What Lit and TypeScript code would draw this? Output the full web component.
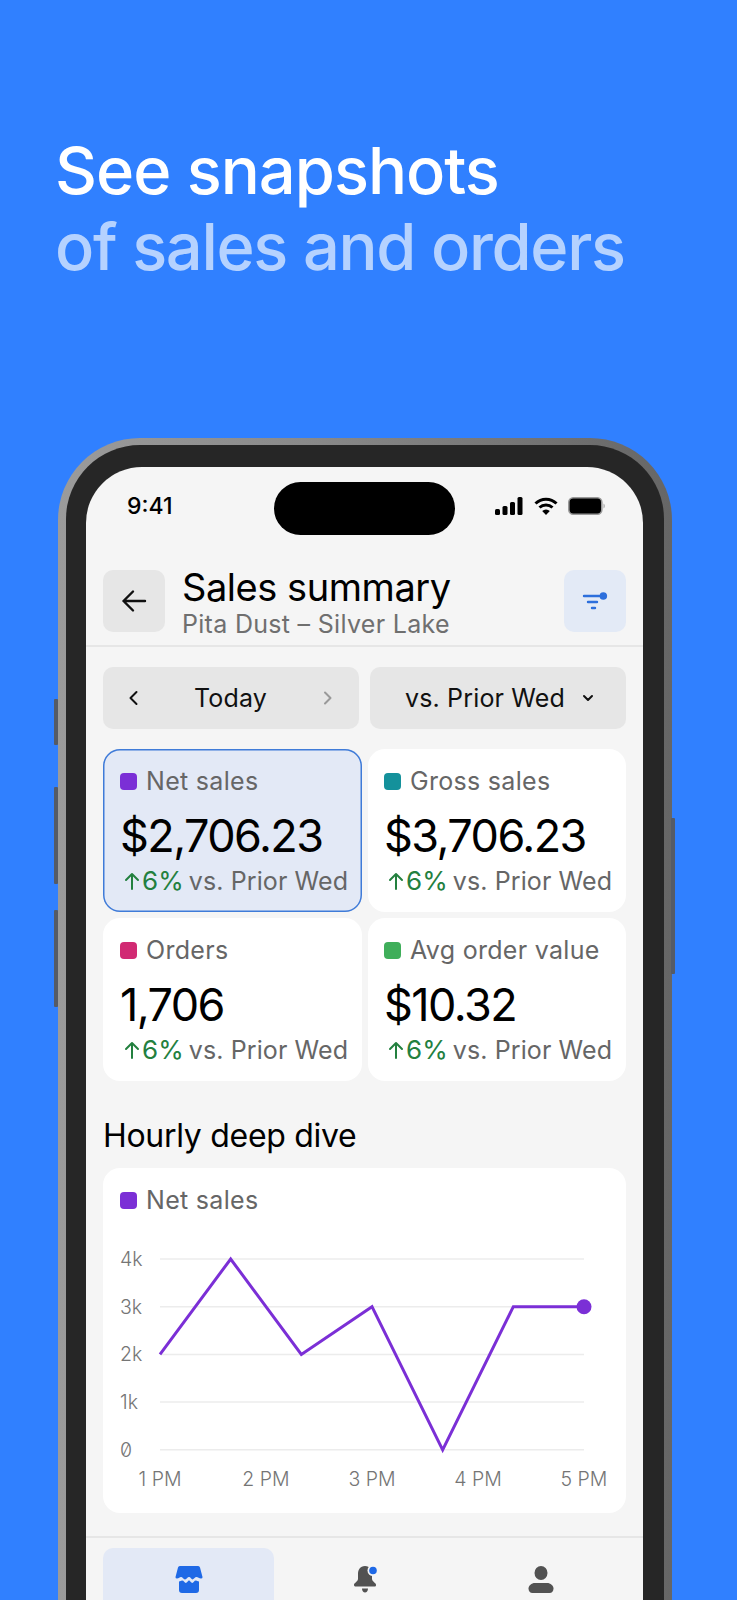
import { LitElement, html, css, svg } from "lit";
import { customElement } from "lit/decorators.js";

const cards = [
  { label: "Net sales", value: "$2,706.23", color: "#7b2fd6", active: true },
  { label: "Gross sales", value: "$3,706.23", color: "#14919b" },
  { label: "Orders", value: "1,706", color: "#d12a73" },
  { label: "Avg order value", value: "$10.32", color: "#3fae5a" },
];

const W = 424;
const values = [2, 4, 2, 3, 0, 3, 3];
const pts = values
  .map((v, i) => `${(i * W) / 6},${(4 - v) * 47.7}`)
  .join(" ");

@customElement("app-root")
export class AppRoot extends LitElement {
  static styles = css`
    :host {
      display: block;
      height: 1600px;
      overflow: hidden;
      font-family: Inter, "Liberation Sans", sans-serif;
    }
    .page {
      height: 1600px;
      overflow: hidden;
      background: #3080ff;
      padding-top: 133px;
      box-sizing: border-box;
    }
    h1 {
      margin: 0 0 0 55px;
      font-size: 65px;
      line-height: 76px;
      font-weight: 500;
      letter-spacing: -1px;
      color: #fff;
    }
    h1 span {
      display: block;
      color: #b5d2ff;
      letter-spacing: -1.35px;
    }
    .phone {
      position: relative;
      margin: 153px 0 0 58px;
      width: 614px;
      height: 1300px;
    }
    .side {
      position: absolute;
      width: 4px;
      background: #555b66;
      border-radius: 1px;
    }
    .bezel {
      height: 100%;
      box-sizing: border-box;
      padding: 7px 8px 0;
      border-radius: 82px;
      background: linear-gradient(90deg, #9b9b9b 0%, #8a8a8a 40%, #666 100%);
    }
    .inner {
      height: 100%;
      box-sizing: border-box;
      padding: 22px 21px 0 20px;
      border-radius: 74px;
      background: #262626;
    }
    .screen {
      position: relative;
      height: 100%;
      border-radius: 56px 56px 0 0;
      background: #f5f5f5;
      overflow: hidden;
    }
    .island {
      position: absolute;
      left: 188px;
      top: 15px;
      width: 181px;
      height: 53px;
      border-radius: 27px;
      background: #000;
    }
    .status {
      display: flex;
      align-items: center;
      justify-content: space-between;
      height: 78px;
      padding: 0 38px 0 41px;
      box-sizing: border-box;
      font-size: 23px;
      font-weight: 500;
      color: #000;
    }
    .status-icons {
      display: flex;
      align-items: center;
      gap: 10.5px;
    }
    .header {
      display: flex;
      align-items: flex-start;
      gap: 17px;
      padding: 25px 17px 13px;
      border-bottom: 2px solid #e6e6e6;
    }
    .iconbtn {
      width: 62px;
      height: 62px;
      border-radius: 10px;
      background: #e6e6e6;
      display: flex;
      align-items: center;
      justify-content: center;
      flex: none;
    }
    .iconbtn.blue {
      background: #e3eaf6;
    }
    .titles {
      flex: 1;
      margin: -4px 0 -7px;
    }
    .title {
      font-size: 38px;
      line-height: 42px;
      color: #000;
      letter-spacing: -0.45px;
    }
    .sub {
      font-size: 25px;
      line-height: 29px;
      margin-top: 2px;
      color: #6f6f6f;
      letter-spacing: 0.3px;
    }
    .filters {
      display: grid;
      grid-template-columns: 256px 256px;
      gap: 11px;
      padding: 20px 17px 20px;
    }
    .filter {
      height: 62px;
      border-radius: 10px;
      background: #e6e6e6;
      display: flex;
      align-items: center;
      justify-content: space-between;
      padding: 0 24px 0 23px;
      box-sizing: border-box;
      font-size: 25px;
      letter-spacing: 0.15px;
      color: #111;
    }
    .filter.compare {
      justify-content: center;
      gap: 16px;
      padding-left: 28px;
    }
    .grid {
      display: grid;
      grid-template-columns: 259px 258px;
      gap: 6px;
      padding: 0 17px;
    }
    .card {
      height: 163px;
      box-sizing: border-box;
      border-radius: 17px;
      background: #fff;
      padding: 17px 0 0 17px;
      white-space: nowrap;
    }
    .card:nth-child(even) {
      padding-left: 16px;
    }
    .card.active {
      background: #e3e9f6;
      box-shadow: inset 0 0 0 1.5px #3f7bd8;
    }
    .legend {
      display: flex;
      align-items: center;
      gap: 9px;
      font-size: 25px;
      line-height: 30px;
      letter-spacing: 0.3px;
      color: #666;
    }
    .legend i {
      width: 17px;
      height: 17px;
      border-radius: 4px;
      flex: none;
    }
    .value {
      font-size: 45px;
      line-height: 56px;
      color: #000;
      margin-top: 12px;
      letter-spacing: -1.55px;
    }
    .delta {
      display: flex;
      align-items: center;
      font-size: 25px;
      line-height: 30px;
      letter-spacing: 0.1px;
      color: #666;
      margin-top: 2px;
    }
    .delta b {
      font-weight: 400;
      font-size: 26px;
      color: #23803f;
      margin-right: 5px;
    }
    .delta svg {
      margin: 0 2px 0 4px;
    }
    h2 {
      margin: 35px 17px 12px;
      font-size: 32px;
      line-height: 40px;
      font-weight: 400;
      color: #000;
      letter-spacing: -0.3px;
    }
    .chart {
      margin: 0 17px;
      height: 345px;
      box-sizing: border-box;
      border-radius: 17px;
      background: #fff;
      padding: 17px 17px 0;
    }
    .plot {
      display: block;
      margin: 32px 0 0 -17px;
    }
    .plot text {
      font-family: Inter, "Liberation Sans", sans-serif;
      font-size: 19.5px;
      fill: #757575;
      font-weight: 300;
      font-feature-settings: "zero";
    }
    .tabs {
      margin-top: 23px;
      border-top: 2px solid #e6e6e6;
      padding: 10px 17px 0;
      display: grid;
      grid-template-columns: repeat(3, 171px);
      gap: 5px;
    }
    .tab {
      height: 80px;
      border-radius: 10px 10px 0 0;
      display: flex;
      justify-content: center;
      padding-top: 18px;
      box-sizing: border-box;
    }
    .tab.active {
      background: #e3e9f6;
    }
  `;

  private chevron(d: string, color: string, w = 16) {
    return html`<svg width="${w}" height="${w}" viewBox="0 0 ${w} ${w}" fill="none" stroke="${color}" stroke-width="2" stroke-linecap="round" stroke-linejoin="round"><path d="${d}"/></svg>`;
  }

  private chart() {
    const rows = ["4k", "3k", "2k", "1k", "0"];
    const xs = ["1 PM", "2 PM", "3 PM", "4 PM", "5 PM"];
    return html`<svg class="plot" width="521" height="262" viewBox="-57 -12 521 262">
      ${rows.map(
        (r, i) => svg`
          <line x1="0" x2="${W}" y1="${i * 47.7}" y2="${i * 47.7}" stroke="#ececec" stroke-width="1.5"/>
          <text x="-40" y="${i * 47.7 + 7}">${r}</text>`
      )}
      ${xs.map(
        (x, i) => svg`<text x="${(i * W) / 4}" y="227" text-anchor="middle">${x}</text>`
      )}
      <polyline points="${pts}" fill="none" stroke="#7b2fd6" stroke-width="3" stroke-linejoin="miter"/>
      <circle cx="${W}" cy="47.7" r="7.5" fill="#7b2fd6"/>
    </svg>`;
  }

  render() {
    return html`<div class="page">
      <h1>See snapshots<span>of sales and orders</span></h1>
      <div class="phone">
        <div class="side" style="left:-4px;top:261px;height:46px"></div>
        <div class="side" style="left:-4px;top:349px;height:97px"></div>
        <div class="side" style="left:-4px;top:472px;height:97px"></div>
        <div class="side" style="right:-3px;top:380px;height:156px"></div>
        <div class="bezel">
          <div class="inner">
            <div class="screen">
              <div class="island"></div>
              <div class="status">
                <span>9:41</span>
                <span class="status-icons">
                  <svg width="28" height="18" viewBox="0 0 28 18" fill="#000">
                    <rect x="0" y="12" width="5" height="6" rx="1.5"/>
                    <rect x="7.5" y="9" width="5" height="9" rx="1.5"/>
                    <rect x="15" y="5" width="5" height="13" rx="1.5"/>
                    <rect x="22.5" y="0" width="5" height="18" rx="1.5"/>
                  </svg>
                  <svg width="24" height="18" viewBox="0 0 24 18" fill="none" stroke="#000" stroke-width="3">
                    <path d="M1.5 6.5a15 15 0 0 1 21 0"/>
                    <path d="M5.5 10.5a9.5 9.5 0 0 1 13 0"/>
                    <path d="M12 18l-3.8-4a5.3 5.3 0 0 1 7.6 0z" fill="#000" stroke="none"/>
                  </svg>
                  <svg width="37" height="18" viewBox="0 0 37 18">
                    <rect x="0.8" y="0.8" width="33" height="16.4" rx="4.5" fill="#000" stroke="#999" stroke-width="1.6"/>
                    <path d="M35.5 6.5a3 3 0 0 1 0 5z" fill="#aaa"/>
                  </svg>
                </span>
              </div>
              <div class="header">
                <div class="iconbtn">
                  <svg width="28" height="28" viewBox="0 0 28 28" fill="none" stroke="#111" stroke-width="2.4" stroke-linecap="round" stroke-linejoin="round"><path d="M25 14H3.500M13 4.500 3.500 14 13 23.500"/></svg>
                </div>
                <div class="titles">
                  <div class="title">Sales summary</div>
                  <div class="sub">Pita Dust – Silver Lake</div>
                </div>
                <div class="iconbtn blue">
                  <svg width="26" height="22" viewBox="0 0 26 22" fill="none" stroke="#2d6fdc" stroke-width="2.4" stroke-linecap="round">
                    <path d="M2 6h15M6 12h9M10 18h3"/>
                    <circle cx="21.300" cy="6" r="3.800" fill="#2d6fdc" stroke="none"/>
                  </svg>
                </div>
              </div>
              <div class="filters">
                <div class="filter">
                  ${this.chevron("M10.500 2L4.500 8l6 6", "#111")}
                  <span>Today</span>
                  ${this.chevron("M6 2.500l5.500 5.500-5.500 5.500", "#999")}
                </div>
                <div class="filter compare">
                  <span>vs. Prior Wed</span>
                  ${this.chevron("M3 5l4 4 4-4", "#111", 14)}
                </div>
              </div>
              <div class="grid">
                ${cards.map(
                  (c) => html`<div class="card ${c.active ? "active" : ""}">
                    <div class="legend"><i style="background:${c.color}"></i>${c.label}</div>
                    <div class="value">${c.value}</div>
                    <div class="delta">
                      <b>
                        <svg width="16" height="18" viewBox="0 0 16 18" fill="none" stroke="#23803f" stroke-width="2" stroke-linecap="round" stroke-linejoin="round"><path d="M8 17V2M2 8l6-6 6 6"/></svg>6%
                      </b>
                      vs. Prior Wed
                    </div>
                  </div>`
                )}
              </div>
              <h2>Hourly deep dive</h2>
              <div class="chart">
                <div class="legend"><i style="background:#7b2fd6"></i>Net sales</div>
                ${this.chart()}
              </div>
              <div class="tabs">
                <div class="tab active">
                  <svg width="28" height="28" viewBox="0 0 28 28" fill="#1f69e6">
                    <path d="M5 0h18a2 2 0 0 1 2 1.600L27.500 11a1.500 1.500 0 0 1-1.500 1.600c-2 0-3-1.600-4.500-1.600s-3 2.400-4 2.400-2-2.400-3.500-2.400-2.500 2.400-4 2.400-2.500-2.400-4-2.400S4 12.600 2 12.600A1.500 1.500 0 0 1 .5 11L3 1.600A2 2 0 0 1 5 0z"/>
                    <path d="M4 15.500c1.500 0 2-1 3-1 2 0 2.500 2.400 3.800 2.400S13 14.500 14 14.500s2 2.400 3.300 2.400 1.700-2.400 3.700-2.400c1 0 1.500 1 3 1V24a3 3 0 0 1-3 3H7a3 3 0 0 1-3-3z"/>
                  </svg>
                </div>
                <div class="tab">
                  <svg width="30" height="30" viewBox="0 0 30 30" fill="#525252">
                    <path d="M15 0c-5 0-7 4-7 8v5c0 1.500-2 3-3.500 4.500C3.500 18.500 4 20 5 20.500h20c1 0 1.500-1.500.5-3C24 16 22 14.500 22 13V8c0-4-2-8-7-8z"/>
                    <path d="M12 22.500h6c0 2.500-1.500 4-3 4s-3-1.500-3-4z"/>
                    <circle cx="23" cy="4.500" r="5.500" fill="#f5f5f5"/>
                    <circle cx="23" cy="4.500" r="3.800" fill="#1f69e6"/>
                  </svg>
                </div>
                <div class="tab">
                  <svg width="28" height="28" viewBox="0 0 28 28" fill="#525252">
                    <ellipse cx="14" cy="7" rx="6.500" ry="7"/>
                    <path d="M8 17h12c3.500 0 6.500 2.500 6.500 5.500 0 2.500-1.500 4.500-4 4.500H5.500c-2.500 0-4-2-4-4.500C1.500 19.500 4.500 17 8 17z"/>
                  </svg>
                </div>
              </div>
            </div>
          </div>
        </div>
      </div>
    </div>`;
  }
}
